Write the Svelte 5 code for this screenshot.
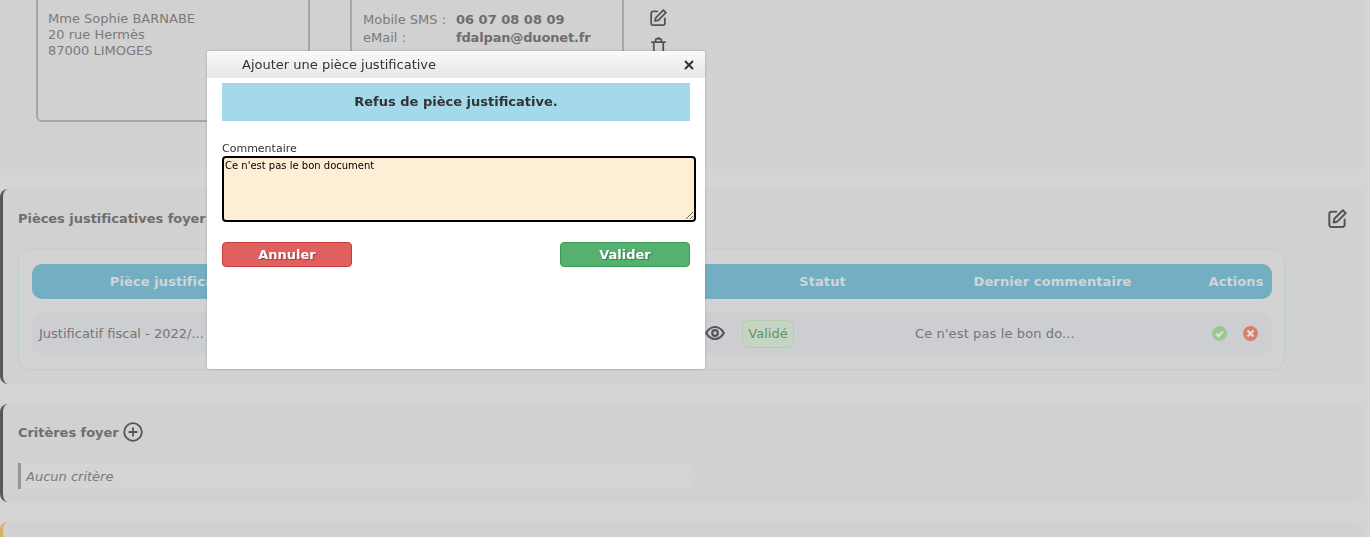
<script>
  const headers = ['Pièce justificative', '', 'Statut', 'Dernier commentaire', 'Actions'];
</script>

<div class="page">
  <section class="card first">
    <div class="address">
      <div>Mme Sophie BARNABE</div>
      <div>20 rue Hermès</div>
      <div>87000 LIMOGES</div>
    </div>
    <div class="contact">
      <div class="line"><span class="key">Mobile SMS :</span><b>06 07 08 08 09</b></div>
      <div class="line"><span class="key">eMail :</span><b class="mail">fdalpan@duonet.fr</b></div>
    </div>
    <div class="tools">
      <svg class="ico" viewBox="1 1 17.500 18"><path d="M8.500 3.500H4a2 2 0 0 0-2 2V16a2 2 0 0 0 2 2h10.500a2 2 0 0 0 2-2v-5M14.800 2.200l2.700 2.700L9.500 13l-3.400.7.700-3.400z"/></svg>
      <svg class="ico trash" viewBox="1 1 18 18"><path d="M3 6.500h14M5 6.500V17a1.500 1.500 0 0 0 1.500 1.500h7A1.500 1.500 0 0 0 15 17V6.500M7 6.500V4a1 1 0 0 1 1-1h4a1 1 0 0 1 1 1v2.500M10 1.500V3"/></svg>
    </div>
  </section>

  <section class="card dark">
    <div class="card-head">
      <h2>Pièces justificatives foyer</h2>
      <svg class="ico big" viewBox="1 1 17.500 18"><path d="M8.500 3.500H4a2 2 0 0 0-2 2V16a2 2 0 0 0 2 2h10.500a2 2 0 0 0 2-2v-5M14.800 2.200l2.700 2.700L9.500 13l-3.400.7.700-3.400z"/></svg>
    </div>
    <div class="table">
      <div class="grid thead">
        {#each headers as h}<span>{h}</span>{/each}
      </div>
      <div class="grid row">
        <span class="doc">Justificatif fiscal - 2022/...</span>
        <span class="view">
          <svg class="eye" viewBox="0 0 20 20"><path d="M1.200 10c2.200-4 5.200-6 8.800-6s6.600 2 8.800 6c-2.200 4-5.200 6-8.800 6s-6.600-2-8.800-6z"/><circle cx="10" cy="10" r="2.800"/></svg>
        </span>
        <span class="status"><span class="badge">Validé</span></span>
        <span class="comment">Ce n'est pas le bon do...</span>
        <span class="actions">
          <svg class="act" viewBox="0 0 16 16"><circle cx="8" cy="8" r="8" fill="#9cc794"/><path d="M4.300 8.300l2.500 2.500 4.900-5" fill="none" stroke="#d9e4d6" stroke-width="2.400"/></svg>
          <svg class="act" viewBox="0 0 16 16"><circle cx="8" cy="8" r="8" fill="#db7d68"/><path d="M4.800 4.800l6.400 6.400M11.200 4.800l-6.400 6.400" fill="none" stroke="#ecdcd8" stroke-width="2.400"/></svg>
        </span>
      </div>
    </div>
  </section>

  <section class="card dark third">
    <div class="crit-head">
      <h2>Critères foyer</h2>
      <svg class="plus" viewBox="0 0 20 20"><circle cx="10" cy="10" r="8.800"/><path d="M10 5.500v9M5.500 10h9"/></svg>
    </div>
    <div class="none">Aucun critère</div>
  </section>

  <section class="card yellow"></section>
</div>

<div class="modal">
  <header class="modal-head">
    <span>Ajouter une pièce justificative</span>
    <svg class="close" viewBox="0 0 10 10"><path d="M1 1l8 8M9 1l-8 8"/></svg>
  </header>
  <div class="modal-body">
    <div class="banner">Refus de pièce justificative.</div>
    <label class="field">
      <span>Commentaire</span>
      <textarea readonly>Ce n'est pas le bon document</textarea>
    </label>
    <div class="buttons">
      <button class="btn red">Annuler</button>
      <button class="btn green">Valider</button>
    </div>
  </div>
</div>

<style>
  :global(body) {
    margin: 0;
    background: #d4d4d4;
    font-family: "DejaVu Sans", Verdana, sans-serif;
    overflow: hidden;
  }
  .page {
    height: 537px;
    overflow: hidden;
    display: flex;
    flex-direction: column;
    gap: 20px;
    padding-right: 6px;
    box-sizing: border-box;
  }
  .card {
    background: #d1d1d1;
    border-radius: 8px;
    flex: none;
    box-sizing: border-box;
  }
  .first {
    height: 209px;
    margin-top: -40px;
    padding-left: 36px;
    display: flex;
    gap: 40px;
    flex: none;
  }
  .address, .contact {
    width: 274px;
    height: 162px;
    box-sizing: border-box;
    border: 2px solid #a6a6a6;
    border-radius: 6px;
    color: #7a7a7a;
    font-size: 13px;
    line-height: 16px;
  }
  .address { padding: 49px 10px 0; }
  .contact { padding: 49px 10px 0 11px; line-height: 18px; }
  .line { display: flex; }
  .key { width: 93px; flex: none; }
  .line b { font-size: 13px; color: #6e6e6e; }
  .line .mail { letter-spacing: -.17px; }
  .tools {
    display: flex;
    flex-direction: column;
    gap: 11px;
    padding-top: 49px;
    margin-left: -14px;
  }
  .ico {
    width: 17px;
    height: 17px;
    fill: none;
    stroke: #555;
    stroke-width: 1.900;
    stroke-linejoin: round;
    stroke-linecap: round;
  }
  .big { width: 19px; height: 19px; }
  .dark { border-left: 3px solid #575757; }
  .card-head {
    height: 58px;
    display: flex;
    align-items: center;
    justify-content: space-between;
    padding: 0 17px 0 15px;
  }
  h2 {
    margin: 0;
    font-size: 13px;
    font-weight: 700;
    color: #6f6f6f;
    letter-spacing: -.04px;
  }
  .card.dark:not(.third) { height: 195px; }
  .table {
    margin: 2px 0 0 15px;
    width: 1267px;
    height: 121px;
    box-sizing: border-box;
    border: 1px solid #bccdd5;
    border-radius: 12px;
    background: #d3d3d3;
    padding: 14px 12px 0 13px;
  }
  .grid {
    display: grid;
    grid-template-columns: 288px 420px 165px 295px 72px;
    align-items: center;
    border-radius: 10px;
  }
  .thead {
    height: 35px;
    background: #74aec2;
    color: #cfd6d8;
    font-weight: 700;
    font-size: 13px;
    letter-spacing: .1px;
    text-align: center;
  }
  .row {
    margin-top: 13px;
    height: 43px;
    background: #cdced1;
    color: #757575;
    font-size: 13px;
  }
  .doc { padding-left: 7px; white-space: nowrap; overflow: hidden; }
  .view { display: flex; justify-content: flex-end; padding: 0 15px 2px 0; }
  .eye {
    width: 20px;
    height: 20px;
    fill: none;
    stroke: #555;
    stroke-width: 2.200;
  }
  .status { padding-left: 2px; }
  .badge {
    display: inline-block;
    width: 52px;
    height: 28px;
    box-sizing: border-box;
    border: 1px solid #b5cbb0;
    border-radius: 7px;
    background: #c6d5c3;
    color: #5d9467;
    text-align: center;
    line-height: 26px;
  }
  .comment { padding-left: 10px; letter-spacing: .12px; }
  .actions { display: flex; gap: 16px; padding-left: 12px; }
  .act { width: 15px; height: 15px; }
  .third { height: 98px; padding-left: 15px; }
  .crit-head {
    height: 56px;
    display: flex;
    align-items: center;
    gap: 4px;
  }
  .plus {
    width: 20px;
    height: 20px;
    fill: none;
    stroke: #555;
    stroke-width: 1.800;
  }
  .none {
    width: 678px;
    height: 26px;
    margin-top: 3px;
    box-sizing: border-box;
    border-left: 3px solid #979797;
    border-radius: 0 13px 13px 0;
    background: #d4d4d4;
    padding-left: 5px;
    font-size: 13px;
    font-style: italic;
    line-height: 28px;
    color: #7a7a7a;
  }
  .yellow { height: 30px; border-left: 3px solid #d9ae5c; }

  .modal {
    position: fixed;
    left: 207px;
    top: 51px;
    width: 498px;
    height: 318px;
    background: #fff;
    border-radius: 3px;
    box-shadow: 0 0 3px rgba(0, 0, 0, .2);
  }
  .modal-head {
    height: 27px;
    background: linear-gradient(#fafafa, #e6e6e6);
    border-radius: 3px 3px 0 0;
    display: flex;
    align-items: center;
    justify-content: space-between;
    padding: 0 11px 0 35px;
    font-size: 13px;
    color: #333;
  }
  .close {
    width: 10px;
    height: 10px;
    fill: none;
    stroke: #333;
    stroke-width: 2;
  }
  .modal-body { padding: 5px 15px 0; }
  .banner {
    height: 38px;
    background: #a4d9ec;
    font-size: 13px;
    font-weight: 700;
    line-height: 38px;
    text-align: center;
    color: #333;
  }
  .field {
    display: block;
    margin-top: 21px;
    font-size: 11px;
    line-height: 14px;
    color: #333;
  }
  .field span { display: block; }
  textarea {
    display: block;
    box-sizing: border-box;
    width: 474px;
    height: 66px;
    margin: 0;
    padding: 1px;
    background: #ffeed6;
    border: 2px solid #000;
    border-radius: 4px;
    outline: none;
    font-family: inherit;
    font-size: 10px;
    line-height: 13px;
    color: #000;
  }
  .buttons {
    display: flex;
    justify-content: space-between;
    margin-top: 20px;
    width: 468px;
  }
  .btn {
    width: 130px;
    height: 25px;
    padding: 0;
    border-radius: 4px;
    font-family: inherit;
    font-size: 13px;
    font-weight: 700;
    color: #fff;
    text-shadow: 1px 1px 1px rgba(0, 0, 0, .35);
  }
  .red { background: #e06060; border: 1px solid #c93c3c; }
  .green { background: #56b170; border: 1px solid #3a9d55; }
</style>
